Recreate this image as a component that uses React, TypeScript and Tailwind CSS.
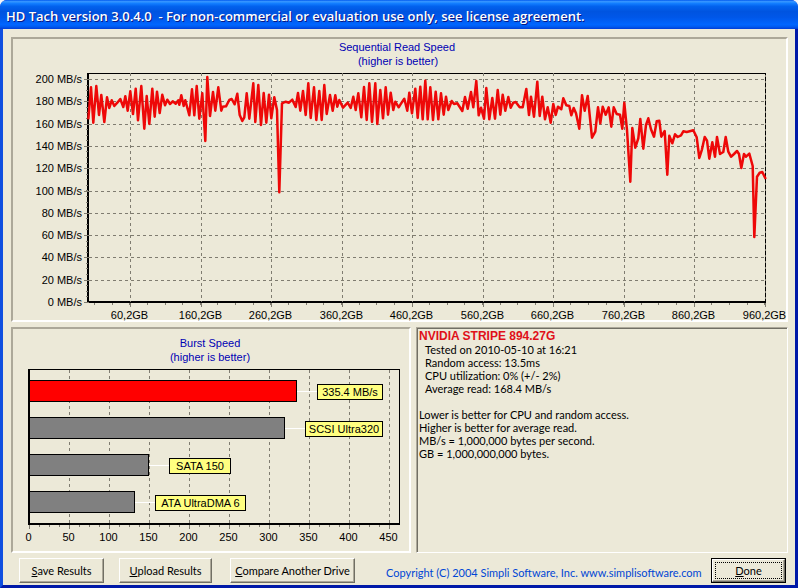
import type { ReactNode } from "react";

// Read-speed trace, stored at three units per pixel, in three consecutive stretches of the disk.
const TRACE_START: number[][] = [
  [265,358],[273,262],[280,368],[289,258],[297,345],[304,285],[313,366],[321,292],[328,324],[335,301],[343,318],[352,308],[361,297],[370,321],[376,289],[383,332],[391,274],[399,342],[407,266],[414,361],[424,258],[433,386],[440,288],[448,372],[457,266],[464,350],[471,275],[479,339],[487,284],[495,316],[502,299],[510,312],[518,304],[527,311],[535,301],[538,314],[544,286],[551,318],[556,301],[568,346],[576,268],[583,346],[590,258],[598,356],[607,280],[616,423],[622,231],[630,348],[639,276],[646,332],[655,262],[664,332],[668,320],[678,319],[688,300],[695,297],[704,313],[712,281],[719,345],[727,363],[733,352],[740,280],[748,356],[760,250],[766,366],[775,255],[783,375],[791,279],
];
const TRACE_MIDDLE: number[][] = [
  [4,368],[12,284],[19,355],[28,292],[36,330],[43,577],[51,310],[62,305],[72,308],[82,299],[92,321],[99,279],[106,332],[114,273],[122,345],[130,250],[137,354],[147,262],[154,360],[163,273],[170,360],[178,255],[185,342],[195,285],[203,332],[211,286],[217,320],[223,300],[234,323],[248,308],[257,324],[265,290],[272,330],[280,280],[289,352],[297,261],[305,360],[313,250],[321,366],[331,250],[337,372],[346,270],[354,355],[362,262],[369,344],[377,278],[385,330],[391,305],[401,322],[408,311],[418,296],[427,332],[433,278],[441,340],[451,266],[458,354],[466,260],[473,358],[481,242],[488,358],[496,262],[504,360],[512,275],[520,358],[528,280],[536,344],[543,290],[550,330],[560,303],[567,312],[577,310],[592,333],[600,291],[608,326],[618,276],[625,322],[634,243],[641,346],[648,323],[657,356],[664,264],[673,358],[682,294],[690,356],[698,270],[706,344],[713,284],[721,332],[730,291],[737,323],[745,308],[752,306],[764,322],[773,322],[784,267],[792,345],
];
const TRACE_END: number[][] = [
  [3,290],[12,350],[22,245],[29,348],[37,290],[45,358],[53,322],[62,368],[70,312],[77,345],[84,320],[94,328],[100,295],[109,316],[118,318],[124,346],[131,324],[138,340],[148,386],[156,286],[164,332],[173,288],[186,413],[196,395],[204,322],[211,370],[218,320],[227,344],[236,322],[244,380],[251,322],[260,342],[270,344],[277,386],[283,308],[291,390],[301,545],[307,384],[316,443],[325,415],[331,357],[340,446],[348,375],[355,355],[363,388],[372,410],[380,364],[388,362],[394,410],[404,393],[412,524],[418,407],[427,430],[435,403],[443,411],[453,406],[460,394],[470,396],[482,393],[490,391],[500,412],[508,474],[516,448],[524,411],[531,422],[538,476],[547,427],[555,470],[561,411],[570,462],[580,456],[587,411],[595,455],[603,470],[612,462],[621,453],[627,462],[634,504],[642,462],[648,470],[658,461],[668,498],[673,711],[681,530],[689,518],[697,516],[707,537],
];

const toPoints = (trace: number[][], shift: number) =>
  trace.map(([x, y]) => `${((x + shift) / 3).toFixed(1)},${(y / 3).toFixed(1)}`).join(" ");

const TRACE = [toPoints(TRACE_START, 0), toPoints(TRACE_MIDDLE, 795), toPoints(TRACE_END, 1590)].join(" ");

const SPEEDS = [200, 180, 160, 140, 120, 100, 80, 60, 40, 20, 0];
const CAPACITIES = ["60,2GB", "160,2GB", "260,2GB", "360,2GB", "460,2GB", "560,2GB", "660,2GB", "760,2GB", "860,2GB", "960,2GB"];

const speedY = (speed: number) => Math.round(302 - (speed * 223) / 200) + 0.5;
const capacityX = (index: number) => Math.round(130 + index * 70.55) + 0.5;

function ReadSpeedChart() {
  return (
    <svg viewBox="13 39 773 281" className="block w-full overflow-visible text-[11px]" role="img" aria-label="Sequential Read Speed">
      <g textAnchor="middle" fill="#0000b4">
        <text x="397" y="51">Sequential Read Speed</text>
        <text x="398" y="65">(higher is better)</text>
      </g>
      <g shapeRendering="crispEdges" fill="none">
        <path d="M88 73.5H765.5V302" stroke="#000" />
        <path d="M88 73V302H766" stroke="#000" strokeWidth="2" />
        <g stroke="#7f7c70">
          {SPEEDS.slice(0, -1).map((s) => (
            <path key={s} d={`M89 ${speedY(s)}H765`} strokeDasharray="3 3" />
          ))}
          {SPEEDS.map((s) => (
            <path key={s} d={`M84 ${speedY(s)}H89`} />
          ))}
          {CAPACITIES.slice(0, -1).map((c, i) => (
            <path key={c} d={`M${capacityX(i)} 73V302`} strokeDasharray="3 3" />
          ))}
          <path d="M765.5 75V302" strokeDasharray="2 4" />
          {CAPACITIES.map((c, i) => (
            <path key={c} d={`M${capacityX(i)} 303V307`} />
          ))}
          {Array.from({ length: 39 }, (_, i) => (
            <path key={i} d={`M${Math.round(94 + i * 17.64) + 0.5} 303V305`} />
          ))}
          {Array.from({ length: 40 }, (_, i) => (
            <path key={i} d={`M86 ${Math.round(79 + i * 5.57) + 0.5}H88`} />
          ))}
        </g>
      </g>
      <polyline points={TRACE} fill="none" stroke="#ee0808" strokeWidth="2.5" strokeLinejoin="round" />
      <g textAnchor="end">
        {SPEEDS.map((s) => (
          <text key={s} x="82" y={speedY(s) + 3.5}>{`${s} MB/s`}</text>
        ))}
      </g>
      <g textAnchor="middle">
        {CAPACITIES.map((c, i) => (
          <text key={c} x={capacityX(i) - 1} y="319">{c}</text>
        ))}
      </g>
    </svg>
  );
}

const BURSTS = [
  { label: "335.4 MB/s", end: 297, tag: 317, width: 66, fill: "#ff0000" },
  { label: "SCSI Ultra320", end: 285, tag: 305, width: 78, fill: "#808080" },
  { label: "SATA 150", end: 149, tag: 169, width: 62, fill: "#808080" },
  { label: "ATA UltraDMA 6", end: 135, tag: 155, width: 91, fill: "#808080" },
];
const BURST_TICKS = [0, 50, 100, 150, 200, 250, 300, 350, 400, 450];

function BurstSpeedChart() {
  return (
    <svg viewBox="13 329 396 222" className="block w-full text-[11px]" role="img" aria-label="Burst Speed">
      <g textAnchor="middle" fill="#0000b4">
        <text x="210" y="347">Burst Speed</text>
        <text x="210" y="361">(higher is better)</text>
      </g>
      <g shapeRendering="crispEdges" fill="none">
        <g stroke="#7f7c70">
          {BURST_TICKS.slice(1).map((t) => (
            <path key={t} d={`M${29.5 + t * 0.8} 370V524`} strokeDasharray="3 3" />
          ))}
          {BURST_TICKS.map((t) => (
            <path key={t} d={`M${29.5 + t * 0.8} 525V529`} />
          ))}
          {Array.from({ length: 37 }, (_, i) => (
            <path key={i} d={`M${29.5 + i * 10} 525V527`} />
          ))}
        </g>
        <path d="M29 369.5H399.5V524" stroke="#000" />
        <path d="M29 369V524H400" stroke="#000" strokeWidth="2" />
      </g>
      {BURSTS.map((b, i) => (
        <g key={b.label}>
          <g shapeRendering="crispEdges">
            <path d={`M${b.end} ${391.5 + i * 37}H${b.tag}`} stroke="#fff" />
            <rect x="29.5" y={380.5 + i * 37} width={b.end - 30} height="21" fill={b.fill} stroke="#000" />
            <rect x={b.tag + 0.5} y={384.5 + i * 37} width={b.width - 1} height="15" fill="#ffff80" stroke="#000" />
          </g>
          <text x={b.tag + b.width / 2} y={396 + i * 37} textAnchor="middle">{b.label}</text>
        </g>
      ))}
      <g textAnchor="middle">
        {BURST_TICKS.map((t) => (
          <text key={t} x={28.5 + t * 0.8} y="541">{t}</text>
        ))}
      </g>
    </svg>
  );
}

function PushButton({ hotkey, children, className }: { hotkey: string; children: ReactNode; className: string }) {
  return (
    <button
      type="button"
      className={`h-[25px] whitespace-nowrap border border-t-white border-l-white border-r-[#716f64] border-b-[#716f64] bg-[#ece9d8] text-center shadow-[inset_-1px_-1px_0_#aca899] ${className}`}
    >
      <span className="underline underline-offset-1">{hotkey}</span>
      {children}
    </button>
  );
}

const panel = "border-2 border-t-[#aca899] border-l-[#aca899] border-r-white border-b-white";

export default function App() {
  return (
    <div className="bg-[#f4f6f8] font-['Liberation_Sans',Arial,sans-serif] text-[11px] leading-[13px] text-black">
      <div className="flex min-h-screen flex-col overflow-hidden rounded-t-[7px] bg-[#0831d9]">
        <header className="flex h-[29px] items-center bg-[linear-gradient(180deg,#0058ee_0%,#3593ff_5%,#288eff_8%,#127dff_12%,#0262ee_22%,#0054e0_40%,#0057e9_60%,#0066ff_85%,#005bf0_92%,#003dd7_100%)] px-1.5 pt-[3px]">
          <h1 className="whitespace-pre font-['Open_Sans',sans-serif] text-[13px] leading-4 font-semibold text-white [text-shadow:1px_1px_#0a1883]">
            {"HD Tach version 3.0.4.0  - For non-commercial or evaluation use only, see license agreement."}
          </h1>
        </header>
        <div className="flex grow flex-col border-x-[3px] border-b-[3px] border-l-[#0f4fe0] border-r-[#0019a8] border-b-[#0019a8]">
          <main className="flex grow flex-col gap-[5px] bg-[#ece9d8] pt-2 pr-[7px] pl-2">
            <section className={panel}>
              <ReadSpeedChart />
            </section>
            <div className="grid grid-cols-[400fr_372fr] gap-[5px]">
              <section className={panel}>
                <BurstSpeedChart />
              </section>
              <section className="border border-t-[#aca899] border-l-[#aca899] border-r-white border-b-white font-[Lato,sans-serif]">
                <div className="h-full border-t border-l border-[#716f64] px-px pt-px">
                  <h2 className="font-['Liberation_Sans',Arial,sans-serif] text-[12px] leading-[13px] font-bold text-[#e01018]">NVIDIA STRIPE 894.27G</h2>
                  <div className="pl-1.5">
                    <p>Tested on 2010-05-10 at 16:21</p>
                    <p>Random access: 13.5ms</p>
                    <p>CPU utilization: 0% (+/- 2%)</p>
                    <p>Average read: 168.4 MB/s</p>
                  </div>
                  <div className="pt-[13px]">
                    <p>Lower is better for CPU and random access.</p>
                    <p>Higher is better for average read.</p>
                    <p>MB/s = 1,000,000 bytes per second.</p>
                    <p>GB = 1,000,000,000 bytes.</p>
                  </div>
                </div>
              </section>
            </div>
            <footer className="flex items-center pl-2 font-[Lato,sans-serif]">
              <PushButton hotkey="S" className="w-[85px]">ave Results</PushButton>
              <PushButton hotkey="U" className="ml-[15px] w-[93px]">pload Results</PushButton>
              <PushButton hotkey="C" className="ml-[18px] w-[125px]">ompare Another Drive</PushButton>
              <p className="ml-[31px] pt-1 whitespace-pre text-[#0046d5]">
                {"Copyright (C) 2004 Simpli Software, Inc. "}
                <a href="http://www.simplisoftware.com">www.simplisoftware.com</a>
              </p>
              <div className="mr-0.5 ml-auto flex border border-black">
                <button
                  type="button"
                  className="h-[23px] w-[73px] border border-t-white border-l-white border-r-[#716f64] border-b-[#716f64] bg-[#ece9d8] p-0.5 shadow-[inset_-1px_-1px_0_#aca899]"
                >
                  <span className="flex h-full items-center justify-center border border-dotted border-black">
                    <span className="underline underline-offset-1">D</span>one
                  </span>
                </button>
              </div>
            </footer>
          </main>
        </div>
      </div>
    </div>
  );
}
